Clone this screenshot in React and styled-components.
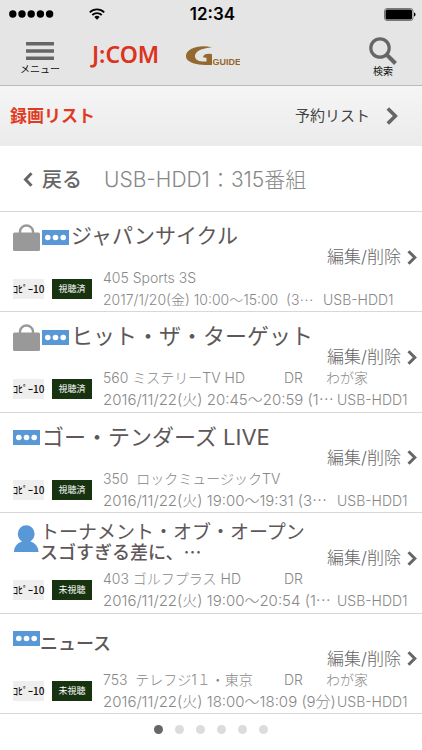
import React, { useState } from "react";
import styled, { createGlobalStyle } from "styled-components";

const GlobalStyle = createGlobalStyle`
  * { box-sizing: border-box; }
  body {
    margin: 0;
    background: #fff;
    color: #666;
    font-family: Inter, "Noto Sans CJK JP", sans-serif;
  }
  button {
    padding: 0; border: 0; background: none;
    font: inherit; color: inherit; cursor: pointer;
  }
  a { color: inherit; text-decoration: none; }
  h1, h2, p, ul { margin: 0; padding: 0; }
  svg { display: block; flex: none; }
`;

const Page = styled.div`
  display: flex; flex-direction: column;
  min-height: 100vh;
`;

const StatusBar = styled.div`
  display: grid; grid-template-columns: 1fr auto 1fr; align-items: center;
  height: 28px; padding: 0 6px 0 9px;
  background: #e5e5e5;
`;

const Signal = styled.div`
  display: flex; align-items: center; gap: 35px;
`;

const Clock = styled.span`
  font-size: 17px; line-height: 28px; font-weight: 600;
  color: #000;
`;

const Battery = styled.div`
  justify-self: end;
`;

const Header = styled.header`
  display: flex; align-items: flex-start;
  height: 58px; padding: 9px 25px 0 20px;
  background: #e5e5e5;
  border-bottom: 1px solid #bbb;
`;

const IconButton = styled.button`
  display: flex; flex-direction: column; align-items: center;
  color: #111; font-size: 10px; line-height: 12px;
`;

const MenuButton = styled(IconButton)`
  gap: 3px; padding-top: 5px;
`;

const SearchButton = styled(IconButton)`
  margin-left: auto;
`;

const JcomLogo = styled.a`
  margin-left: 32px;
  font: 600 23px/34px "Noto Sans", sans-serif;
  color: #dc3220;
`;

const GuideLogo = styled.a`
  margin: 9px 0 0 27px;
`;

const TabBar = styled.nav`
  display: flex; justify-content: space-between; align-items: center;
  height: 60px; padding: 0 24px 0 10px;
  background: linear-gradient(#f5f5f5, #ebebeb);
`;

const CurrentTab = styled.h1`
  font-size: 17px; line-height: 24px; font-weight: 600;
  color: #df3b22;
`;

const TabLink = styled.a`
  display: flex; align-items: center; gap: 16px;
  font-size: 15px; line-height: 24px;
  color: #444;
`;

const SubHeader = styled.div`
  display: flex; align-items: center; gap: 22px;
  height: 65px; padding: 2px 23px 0;
`;

const BackButton = styled.button`
  display: flex; align-items: center; gap: 9px;
  font-size: 20px; line-height: 28px; font-weight: 500;
`;

const Summary = styled.p`
  font-size: 21px; line-height: 28px; font-weight: 300;
  color: #888;
`;

const List = styled.ul`
  flex: 1;
  display: grid; grid-auto-rows: 1fr;
  border-bottom: 1px solid #d8d8d8;
  list-style: none;
`;

const Row = styled.li`
  min-height: 100px;
  padding: 0 5px 0 13px;
  border-top: 1px solid #d8d8d8;
`;

const RowTop = styled.div`
  display: flex;
  height: 55px;
`;

const Icons = styled.div`
  display: flex; align-items: center; gap: 2px;
  height: 50px;
`;

const Title = styled.h2`
  display: flex; flex-direction: column; justify-content: center;
  height: ${p => (p.$small ? 60 : 48)}px;
  margin-left: ${p => (p.$small ? 0 : 2)}px;
  font-size: ${p => p.$size}px;
  line-height: ${p => (p.$small ? 20 : 32)}px;
  font-weight: ${p => (p.$small ? 500 : 400)};
  color: #5e5759;
  white-space: nowrap;
`;

const LeadLine = styled.span`
  font-size: 19px; font-weight: 400;
`;

// keeps the dots on the middle of the line
const Ellipsis = styled.span`
  font-family: "Noto Sans CJK JP", sans-serif;
  line-height: 0;
`;

const EditButton = styled.button`
  display: flex; align-items: center; gap: 6px;
  align-self: flex-end;
  height: 20px; margin-left: auto;
  font-size: 17px; line-height: 20px; font-weight: 300;
`;

const RowBottom = styled.div`
  display: flex; align-items: center;
`;

const CopyBadge = styled.span`
  width: 31px;
  background: #eee;
  color: #111; font: 500 10px/20px "Noto Sans CJK JP", sans-serif;
  text-align: center; white-space: nowrap;
`;

const WatchedBadge = styled.span`
  width: 40px; margin-left: 8px;
  background: #17330f;
  color: #fff; font-size: 9px; line-height: 20px;
  text-align: center;
`;

const Meta = styled.div`
  flex: 1; min-width: 0; margin-left: 11px;
  font-size: 14px; line-height: 22px; font-weight: 300;
  color: #888;
  white-space: pre;
`;

const Channel = styled.div`
  display: grid; grid-template-columns: 181px 42px auto;
`;

const Schedule = styled.div`
  display: flex; align-items: baseline;
`;

const Time = styled.span`
  min-width: ${p => (p.$short ? 220 : 234)}px;
  font-size: ${p => (p.$short ? 14 : 15)}px;
`;

const Pager = styled.nav`
  display: flex; justify-content: center; align-items: center; gap: 12px;
  height: 36px; padding-bottom: 6px;
`;

const Dot = styled.button`
  width: 9px; height: 9px;
  border-radius: 50%;
  background: ${p => (p.$active ? "#666" : "#dcdcdc")};
`;

const Chevron = ({ width = 10, height = 15, left = false }) => (
  <svg width={width} height={height} viewBox="0 0 10 15" fill="none" stroke="#666" strokeWidth="3">
    <path d={left ? "M8.5 1.2 2.5 7.5l6 6.3" : "M1.5 1.2 7.8 7.5 1.5 13.8"} />
  </svg>
);

const LockIcon = () => (
  <svg width="27" height="27" viewBox="0 0 27 27">
    <path d="M7 10V7.500a6.500 6 0 0 1 13 0V10" fill="none" stroke="#999" strokeWidth="2.4" />
    <rect y="8.5" width="27" height="18.5" rx="1.5" fill="#999" />
  </svg>
);

const DotsIcon = () => (
  <svg width="27" height="15" viewBox="0 0 27 15">
    <rect width="27" height="15" fill="#5898d6" />
    <g fill="#fff">
      <circle cx="5.8" cy="7.5" r="2.8" />
      <circle cx="13.5" cy="7.5" r="2.8" />
      <circle cx="21.2" cy="7.5" r="2.8" />
    </g>
  </svg>
);

const PersonIcon = () => (
  <svg width="27" height="27" viewBox="0 0 27 27" fill="#5898d6">
    <path d="M1 27c0-5 3-9 8-10.5C6.500 14.500 4.800 12 4.800 8.700A8.400 8.400 0 0 1 21.600 8.700c0 3.300-1.700 5.800-4.200 7.800C22.500 18 25.500 22 25.500 27z" />
  </svg>
);

const icons = { lock: LockIcon, dots: DotsIcon, person: PersonIcon };

const programs = [
  {
    icons: ["lock", "dots"], title: "ジャパンサイクル", size: 21, watched: true,
    channel: "405 Sports 3S",
    time: "2017/1/20(金) 10:00～15:00  (3", cut: true, short: true
  },
  {
    icons: ["lock", "dots"], title: "ヒット・ザ・ターゲット", size: 22, watched: true,
    channel: "560 ミステリーTV HD", mode: "DR", folder: "わが家",
    time: "2016/11/22(火) 20:45～20:59 (1", cut: true
  },
  {
    icons: ["dots"], title: "ゴー・テンダーズ LIVE", size: 22, watched: true,
    channel: "350  ロックミュージックTV",
    time: "2016/11/22(火) 19:00～19:31 (3", cut: true
  },
  {
    icons: ["person"], lead: "トーナメント・オブ・オープン", title: "スゴすぎる差に、", titleCut: true, size: 18, small: true,
    channel: "403 ゴルフプラス HD", mode: "DR",
    time: "2016/11/22(火) 19:00～20:54 (1", cut: true
  },
  {
    icons: ["dots"], title: "ニュース", size: 18, small: true,
    channel: "753  テレフジ1１・東京", mode: "DR", folder: "わが家",
    time: "2016/11/22(火) 18:00～18:09 (9分)"
  }
];

const ProgramRow = ({ program }) => (
  <Row>
    <RowTop>
      <Icons>
        {program.icons.map(name => {
          const Icon = icons[name];
          return <Icon key={name} />;
        })}
      </Icons>
      <Title $small={program.small} $size={program.size}>
        {program.lead && <LeadLine>{program.lead}</LeadLine>}
        <span>{program.title}{program.titleCut && <Ellipsis>…</Ellipsis>}</span>
      </Title>
      <EditButton>編集/削除 <Chevron /></EditButton>
    </RowTop>
    <RowBottom>
      <CopyBadge>ｺﾋﾟｰ10</CopyBadge>
      <WatchedBadge>{program.watched ? "視聴済" : "未視聴"}</WatchedBadge>
      <Meta>
        <Channel>
          <span>{program.channel}</span>
          <span>{program.mode}</span>
          <span>{program.folder}</span>
        </Channel>
        <Schedule>
          <Time $short={program.short}>
            {program.time}{program.cut && <Ellipsis>…</Ellipsis>}
          </Time>
          <span>USB-HDD1</span>
        </Schedule>
      </Meta>
    </RowBottom>
  </Row>
);

export default function App() {
  const [page, setPage] = useState(0);

  return (
    <Page>
      <GlobalStyle />
      <StatusBar>
        <Signal>
          <svg width="45" height="8" viewBox="0 0 45 8">
            {[0, 1, 2, 3, 4].map(i => <circle key={i} cx={3.8 + i * 9.2} cy="4" r="3.7" />)}
          </svg>
          <svg width="16" height="12" viewBox="0 0 16 12" fill="none" stroke="#000" strokeWidth="1.8">
            <path d="M.8 4.300a10.200 10.200 0 0 1 14.400 0M3.300 7a6.600 6.600 0 0 1 9.400 0" />
            <path d="M8 11.800 5.300 9.100a3.900 3.900 0 0 1 5.400 0z" fill="#000" stroke="none" />
          </svg>
        </Signal>
        <Clock>12:34</Clock>
        <Battery>
          <svg width="32" height="13" viewBox="0 0 32 13">
            <rect x=".5" y=".5" width="28.5" height="12" rx="2.5" fill="none" stroke="#777" />
            <rect x="1.5" y="1.5" width="26.5" height="10" rx="1.5" />
            <path d="M30 4.500c2 .5 2 3.500 0 4z" />
          </svg>
        </Battery>
      </StatusBar>

      <Header>
        <MenuButton>
          <svg width="28" height="18" viewBox="0 0 28 18" fill="#666">
            <path d="M0 0h28v3.500H0zM0 7.200h28v3.500H0zM0 14.400h28v3.500H0z" />
          </svg>
          メニュー
        </MenuButton>
        <JcomLogo href="#">J:COM</JcomLogo>
        <GuideLogo href="#">
          <svg width="54" height="24" viewBox="0 0 54 24" fill="#94692f">
            <path d="M26 1.500C19-.6 11 0 5.500 2.800-1 6.200-1.500 11.500 2.500 14.800 7 18.500 15 19.300 26 19V8.200c-4.500-1.200-8.500 0-9 2.800 1 .8 2.300.8 3.500.5v4C14 16 9.500 14.500 9 10.500 8.600 6 15 2 26 1.500z" />
            <text x="26.5" y="18.5" fontFamily="Liberation Sans Narrow, Liberation Sans, sans-serif" fontWeight="700" fontSize="9">GUIDE</text>
          </svg>
        </GuideLogo>
        <SearchButton>
          <svg width="28" height="28" viewBox="0 0 28 28" fill="none" stroke="#666">
            <circle cx="11" cy="11" r="9.2" strokeWidth="3.2" />
            <path d="M17.500 17.500 26.500 26.500" strokeWidth="4" />
          </svg>
          検索
        </SearchButton>
      </Header>

      <TabBar>
        <CurrentTab>録画リスト</CurrentTab>
        <TabLink href="#">予約リスト <Chevron width={12} height={18} /></TabLink>
      </TabBar>

      <SubHeader>
        <BackButton><Chevron left />戻る</BackButton>
        <Summary>USB-HDD1：315番組</Summary>
      </SubHeader>

      <List>
        {programs.map(program => <ProgramRow key={program.channel} program={program} />)}
      </List>

      <Pager>
        {[0, 1, 2, 3, 4, 5].map(i => (
          <Dot key={i} aria-label={`${i + 1}`} $active={i === page} onClick={() => setPage(i)} />
        ))}
      </Pager>
    </Page>
  );
}
